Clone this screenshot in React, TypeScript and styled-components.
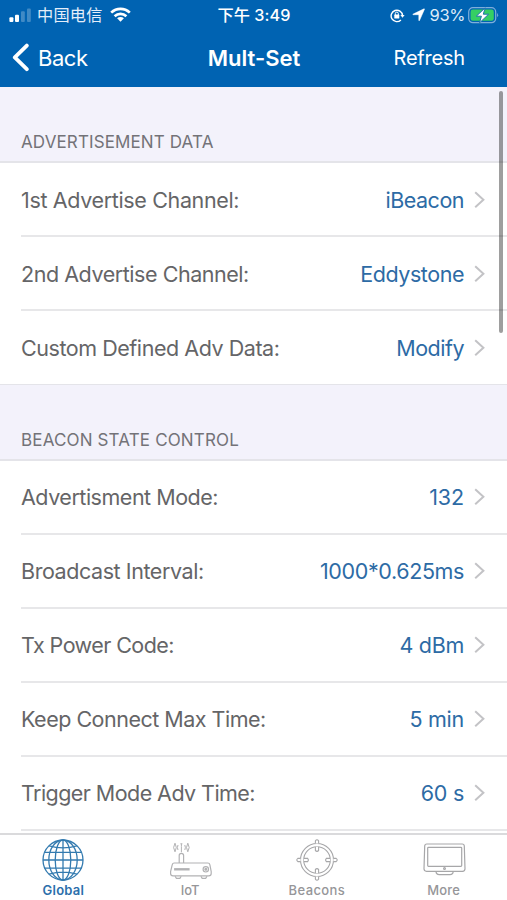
import React from "react";
import styled, { createGlobalStyle } from "styled-components";

const GlobalStyle = createGlobalStyle`
  *, *::before, *::after { box-sizing: border-box; }
  html, body { margin: 0; padding: 0; background: #fff; overflow: hidden; }
  body { font-family: Inter, "Noto Sans CJK SC", sans-serif; -webkit-font-smoothing: antialiased; }
  svg { display: block; flex: none; }
`;

const Screen = styled.div`
  position: relative;
  display: flex;
  flex-direction: column;
  width: 507px;
  height: 900px;
  overflow: hidden;
  background: #fff;
`;

const Header = styled.header`
  flex: none;
  height: 87px;
  background: #0063b2;
  color: #fff;
`;

const StatusBar = styled.div`
  display: grid;
  grid-template-columns: 1fr auto 1fr;
  align-items: center;
  height: 30px;
  padding: 0 8px 0 9px;
  font-size: 16px;
  line-height: 28px;
  white-space: nowrap;
`;

const Cluster = styled.div<{ $end?: boolean }>`
  display: flex;
  align-items: center;
  justify-content: ${(p) => (p.$end ? "flex-end" : "flex-start")};
`;

const Carrier = styled.span`
  margin: 0 7px 0 5px;
  font-size: 16.2px;
  letter-spacing: 0.25px;
  color: #e4eefa;
`;

const Clock = styled.span`
  font-weight: 500;
  font-size: 16.2px;
  letter-spacing: 0.05px;
`;

const Percent = styled.span`
  margin: 0 3px 0 5px;
  font-size: 16.5px;
  letter-spacing: -0.4px;
  color: #deebf9;
`;

const NavBar = styled.nav`
  display: grid;
  grid-template-columns: 1fr auto 1fr;
  align-items: center;
  height: 56px;
  padding: 0 42px 0 12px;
  line-height: 55px;
`;

const BackButton = styled.a`
  display: flex;
  align-items: center;
  gap: 8px;
  font-size: 22px;
  letter-spacing: -0.45px;
`;

const Title = styled.h1`
  margin: 0 0 0 31px;
  font-size: 22px;
  font-weight: 600;
  letter-spacing: 0;
`;

const RefreshButton = styled.a`
  justify-self: end;
  font-size: 20px;
  letter-spacing: -0.2px;
`;

const Content = styled.main`
  flex: none;
  height: 746px;
  overflow: hidden;
`;

const SectionHeader = styled.h2<{ $gap: number; $track: number }>`
  display: flex;
  align-items: flex-end;
  height: ${(p) => p.$gap}px;
  margin: 0;
  padding: 0 21px 6px;
  background: #f3f2fb;
  border-bottom: 2px solid #e4e4e9;
  color: #737378;
  font-size: 17px;
  font-weight: 400;
  line-height: 26px;
  letter-spacing: ${(p) => p.$track}px;
`;

const List = styled.div<{ $closed?: boolean }>`
  padding-left: 21px;
  border-bottom: ${(p) => (p.$closed ? "1px solid #e4e4e9" : "none")};
`;

const Row = styled.div<{ $last?: boolean }>`
  display: flex;
  align-items: center;
  height: ${(p) => (p.$last ? 72.6 : 74)}px;
  padding: 1px 22px 0 0;
  border-bottom: ${(p) => (p.$last ? "none" : "2px solid #e7e7e9")};
  font-size: 21.5px;
  font-feature-settings: "calt" 0;
  white-space: nowrap;
`;

const Label = styled.span<{ $track: number }>`
  flex: 1;
  color: #656567;
  letter-spacing: ${(p) => p.$track}px;
`;

const Value = styled.span<{ $track: number }>`
  margin-right: 10px;
  color: #2d6ba5;
  letter-spacing: ${(p) => p.$track}px;
`;

const ScrollThumb = styled.div`
  position: absolute;
  top: 91px;
  right: 4px;
  width: 4px;
  height: 242px;
  border-radius: 2px;
  background: rgba(0, 0, 0, 0.38);
`;

const TabBar = styled.footer`
  display: grid;
  grid-template-columns: repeat(4, 1fr);
  height: 67px;
  border-top: 2px solid #dadadc;
  background: #fff;
`;

const Tab = styled.div<{ $active?: boolean; $track: number }>`
  display: flex;
  flex-direction: column;
  align-items: center;
  padding-top: 3px;
  color: ${(p) => (p.$active ? "#2c6fab" : "#969699")};
  font-size: 13px;
  font-weight: ${(p) => (p.$active ? 600 : 500)};
  line-height: 17px;
  letter-spacing: ${(p) => p.$track}px;
`;

const SignalIcon = () => (
  <svg width="23" height="16" viewBox="0 0 23 16" fill="#fff">
    <rect x="0.4" y="10.2" width="4" height="4.7" rx="1" />
    <rect x="6" y="7.7" width="4" height="7.2" rx="1" />
    <rect x="12" y="4.2" width="3.8" height="10.7" rx="1" opacity="0.25" />
    <rect x="18" y="1.5" width="3.8" height="13.4" rx="1" opacity="0.25" />
  </svg>
);

const WifiIcon = () => (
  <svg width="21" height="16" viewBox="0 0 21 16" fill="none" stroke="#fff" strokeWidth="2.7">
    <path d="M1.2 5.6C6.5 0.5 14.5 0.5 19.8 5.6" />
    <path d="M4.6 9.2C8 6 13 6 16.4 9.2" />
    <path d="M10.5 14.8L7.1 11.3C9 9.7 12 9.7 13.9 11.3Z" fill="#fff" stroke="none" />
  </svg>
);

const LockIcon = () => (
  <svg width="15" height="15" viewBox="0 0 15 15" fill="none" stroke="#fff" strokeWidth="1.4">
    <path d="M10.9 11.9A5.7 5.7 0 1 1 12.5 7.4" />
    <path d="M10.4 7H14.6L12.5 9.8Z" fill="#fff" stroke="none" />
    <rect x="4.3" y="6.6" width="5" height="3.9" rx="0.6" fill="#fff" stroke="none" />
    <path d="M5.3 7V5.6A1.5 1.5 0 0 1 8.3 5.6V7" strokeWidth="1" />
  </svg>
);

const LocationIcon = () => (
  <svg width="20" height="14" viewBox="-7 0 20 14" fill="#fff" stroke="#fff" strokeWidth="0.5">
    <path d="M12 0.8Q12.7 0.7 12.4 1.4L7.5 12.5Q7 13.1 6.8 12.4V7.2Q6.8 6.7 6.3 6.7H1.2Q0.4 6.5 1.1 6.1Z" />
  </svg>
);

const BatteryIcon = () => (
  <svg width="31" height="17" viewBox="0 0 31 17">
    <rect x="0.7" y="0.7" width="27" height="15" rx="4.2" fill="none" stroke="#7faedb" strokeWidth="1.2" />
    <rect x="2.6" y="2.6" width="23.2" height="11.2" rx="2.3" fill="#35cf63" />
    <path d="M29.1 6.1Q31.2 8.2 29.1 10.3Z" fill="#7faedb" />
    <path d="M17.2 0.8L8.3 9.2H13.4L11.5 15.9L20.6 7.2H15.3Z" fill="#fff" stroke="#1f72ab" strokeWidth="1" />
  </svg>
);

const BackIcon = () => (
  <svg width="18" height="30" viewBox="0 0 18 30" fill="none" stroke="#fff" strokeWidth="3.8" strokeLinecap="round" strokeLinejoin="round">
    <path d="M14.8 2.6L2.8 14.4L14.8 26.2" />
  </svg>
);

const Chevron = () => (
  <svg width="11" height="18" viewBox="0 0 11 18" fill="none" stroke="#c3c3c6" strokeWidth="2">
    <path d="M1.2 1.2L9.4 8.7L1.2 16.2" />
  </svg>
);

const GlobeIcon = () => (
  <svg width="44" height="44" viewBox="0 0 44 44" fill="none" stroke="#347bb0" strokeWidth="1.3">
    <circle cx="22" cy="22" r="20" />
    <ellipse cx="22" cy="22" rx="14.2" ry="20" />
    <ellipse cx="22" cy="22" rx="7.8" ry="20" />
    <path d="M22 2V42M2 22H42M8 7.9Q22 11.8 36 7.9M3.4 14.4H40.6M3.4 30.2H40.6M8 36.1Q22 32.2 36 36.1" />
  </svg>
);

const RouterIcon = () => (
  <svg width="44" height="44" viewBox="-1 0 44 44" fill="none" stroke="#b2b2b4" strokeWidth="1.2">
    <path d="M5.2 25H38.8Q40.6 25 40.9 26.8L42.2 33.6V35.4Q42.2 37.8 39.8 37.8H4Q1.6 37.8 1.6 35.4V33.6L3.2 26.8Q3.6 25 5.2 25Z" />
    <path d="M10.2 25V17.6Q10.2 15.4 12.4 15.4T14.6 17.6V25M6.1 38.2L7.4 40.3H10.9L12.2 38.2M31.9 38.2L33.2 40.3H36.7L38 38.2" />
    <path d="M5.1 31.3H20.6" strokeWidth="2.4" />
    <circle cx="36.8" cy="31.3" r="2.7" />
    <circle cx="36.8" cy="31.3" r="0.9" fill="#b2b2b4" />
    <path d="M12.4 8.5V14.2M11.4 5.8H13.4M12.4 5.8V8.5M9 7Q7.8 9.5 9 12M15.8 7Q17 9.5 15.8 12M6 5.2Q3.2 9.5 6 13.8Q8.6 9.5 6 5.2M18.8 5.2Q21.6 9.5 18.8 13.8Q16.2 9.5 18.8 5.2" strokeWidth="1" />
  </svg>
);

const TargetIcon = () => (
  <svg width="44" height="44" viewBox="0 0 44 44" fill="#fff" stroke="#a7a7a9" strokeWidth="1.1">
    <circle cx="22" cy="22" r="16.5" />
    <circle cx="22" cy="22" r="13.3" />
    <path d="M20.4 5.6V2.9Q22 .7 23.6 2.9V5.6M20.4 38.4V41.1Q22 43.3 23.6 41.1V38.4M5.6 20.4H2.9Q.7 22 2.9 23.6H5.6M38.4 20.4H41.1Q43.3 22 41.1 23.6H38.4" />
    <path d="M20.4 8.8V12.5Q22 14.2 23.6 12.5V8.8M20.4 35.2V31.5Q22 29.8 23.6 31.5V35.2M8.8 20.4H12.7Q14.2 22 12.7 23.6H8.8M35.2 20.4H31.3Q29.8 22 31.3 23.6H35.2" />
  </svg>
);

const MonitorIcon = () => (
  <svg width="44" height="44" viewBox="0 0 44 44" fill="none" stroke="#a7a7a9" strokeWidth="1.2">
    <path d="M4.8 6H40.2Q42.2 6 42.3 8L43 30.8Q43 33.3 40.5 33.3H4.5Q2 33.3 2 30.8L2.7 8Q2.8 6 4.8 6Z" />
    <rect x="5.7" y="9.3" width="34" height="19" rx="0.8" />
    <path d="M14 33.4Q14.2 36.6 17.2 36.6H28Q31 36.6 31.2 33.4" />
    <circle cx="22.5" cy="30.6" r="0.9" />
  </svg>
);

const sections = [
  {
    title: "ADVERTISEMENT DATA",
    gap: 76,
    track: 0.12,
    closed: true,
    rows: [
      { label: "1st Advertise Channel:", value: "iBeacon", lt: -0.35, vt: -0.5 },
      { label: "2nd Advertise Channel:", value: "Eddystone", lt: -0.45, vt: -0.45 },
      { label: "Custom Defined Adv Data:", value: "Modify", lt: -0.45, vt: -0.5 },
    ],
  },
  {
    title: "BEACON STATE CONTROL",
    gap: 76.4,
    track: 0.15,
    closed: false,
    rows: [
      { label: "Advertisment Mode:", value: "132", lt: -0.48, vt: -0.1 },
      { label: "Broadcast Interval:", value: "1000*0.625ms", lt: -0.43, vt: -0.38 },
      { label: "Tx Power Code:", value: "4 dBm", lt: -0.57, vt: -0.3 },
      { label: "Keep Connect Max Time:", value: "5 min", lt: -0.5, vt: -0.25 },
      { label: "Trigger Mode Adv Time:", value: "60 s", lt: -0.56, vt: -0.25 },
    ],
  },
];

const tabs = [
  { name: "Global", Icon: GlobeIcon, track: 0.25 },
  { name: "IoT", Icon: RouterIcon, track: 0 },
  { name: "Beacons", Icon: TargetIcon, track: 0.4 },
  { name: "More", Icon: MonitorIcon, track: 0.2 },
];

export default function App() {
  return (
    <Screen>
      <GlobalStyle />
      <Header>
        <StatusBar>
          <Cluster>
            <SignalIcon />
            <Carrier>中国电信</Carrier>
            <WifiIcon />
          </Cluster>
          <Clock>下午 3:49</Clock>
          <Cluster $end>
            <LockIcon />
            <LocationIcon />
            <Percent>93%</Percent>
            <BatteryIcon />
          </Cluster>
        </StatusBar>
        <NavBar>
          <BackButton>
            <BackIcon />
            Back
          </BackButton>
          <Title>Mult-Set</Title>
          <RefreshButton>Refresh</RefreshButton>
        </NavBar>
      </Header>
      <Content>
        {sections.map((s) => (
          <section key={s.title}>
            <SectionHeader $gap={s.gap} $track={s.track}>
              <span>{s.title}</span>
            </SectionHeader>
            <List $closed={s.closed}>
              {s.rows.map((r, i) => (
                <Row key={r.label} $last={s.closed && i === s.rows.length - 1}>
                  <Label $track={r.lt}>{r.label}</Label>
                  <Value $track={r.vt}>{r.value}</Value>
                  <Chevron />
                </Row>
              ))}
            </List>
          </section>
        ))}
      </Content>
      <ScrollThumb />
      <TabBar>
        {tabs.map(({ name, Icon, track }, i) => (
          <Tab key={name} $active={i === 0} $track={track}>
            <Icon />
            <span>{name}</span>
          </Tab>
        ))}
      </TabBar>
    </Screen>
  );
}
